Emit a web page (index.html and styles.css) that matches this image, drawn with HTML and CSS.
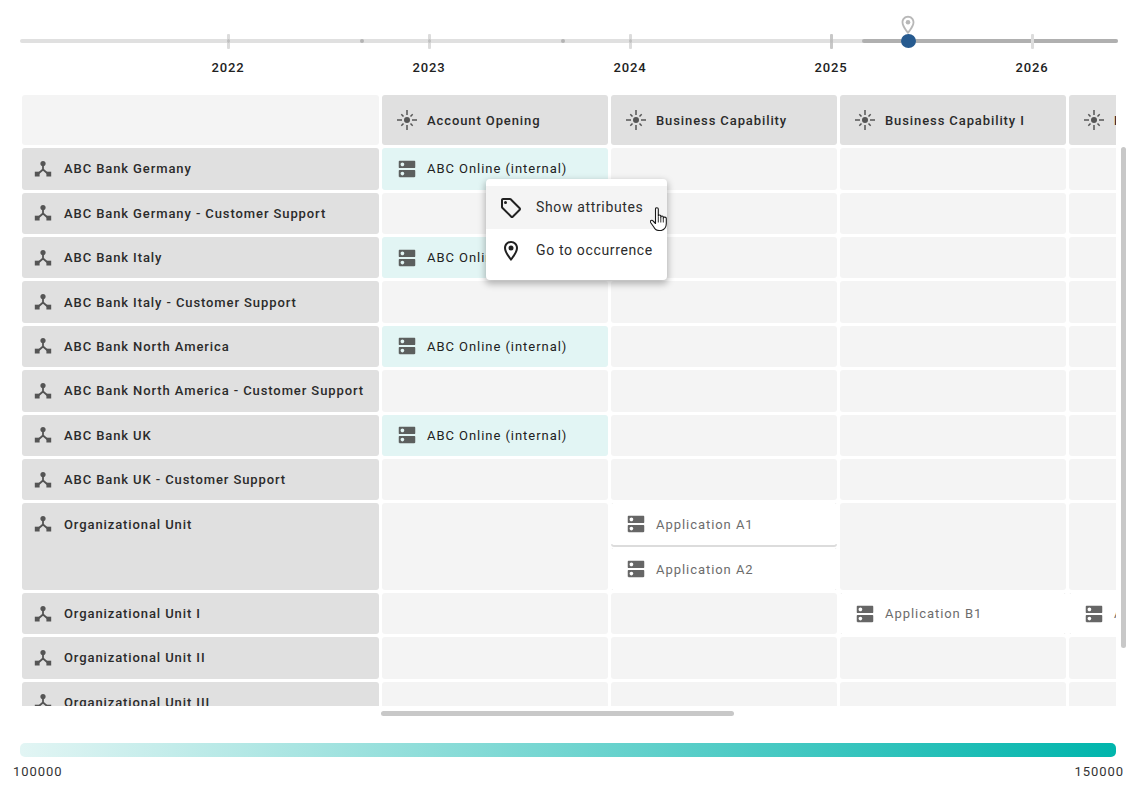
FILE: index.html
```html
<!DOCTYPE html>
<html lang="en">
<head>
<meta charset="utf-8">
<title>Matrix</title>
<link rel="stylesheet" href="styles.css">
</head>
<body>
<svg class="defs" width="0" height="0" aria-hidden="true">
  <symbol id="org" viewBox="0 0 18 18">
    <circle cx="9" cy="3.6" r="2.6"/>
    <path d="M9 4.500v5M9 9.500 3.800 14M9 9.500l5.200 4.500" fill="none" stroke="currentColor" stroke-width="1.800"/>
    <rect x="0.800" y="11.700" width="4.800" height="4.800"/>
    <rect x="12.400" y="11.700" width="4.800" height="4.800"/>
  </symbol>
  <symbol id="dns" viewBox="0 0 24 24">
    <path d="M20 13H4c-.55 0-1 .45-1 1v6c0 .55.45 1 1 1h16c.55 0 1-.45 1-1v-6c0-.55-.45-1-1-1zM7 19c-1.100 0-2-.9-2-2s.9-2 2-2 2 .9 2 2-.9 2-2 2zM20 3H4c-.55 0-1 .45-1 1v6c0 .55.45 1 1 1h16c.55 0 1-.45 1-1V4c0-.55-.45-1-1-1zM7 9c-1.100 0-2-.9-2-2s.9-2 2-2 2 .9 2 2-.9 2-2 2z"/>
  </symbol>
  <symbol id="cap" viewBox="0 0 20 20">
    <circle cx="10" cy="10" r="3"/>
    <path d="M10 0v5M10 15v5M0 10h5M15 10h5M4.300 4.300l2.200 2.200M13.500 13.500l2.200 2.200M15.700 4.300l-2.200 2.200M6.500 13.500l-2.200 2.200" fill="none" stroke="currentColor" stroke-width="1.500"/>
  </symbol>
  <symbol id="tag" viewBox="0 0 24 24">
    <path d="M21.410 11.580l-9-9C12.050 2.220 11.550 2 11 2H4c-1.100 0-2 .9-2 2v7c0 .55.22 1.050.59 1.420l9 9c.36.36.86.58 1.410.58s1.050-.22 1.410-.59l7-7c.37-.36.59-.86.59-1.410s-.23-1.060-.59-1.420zM13 20.010L4 11V4h7v-.01l9 9-7 7.020z"/>
    <circle cx="6.500" cy="6.500" r="1.500"/>
  </symbol>
  <symbol id="pin" viewBox="0 0 24 24">
    <path d="M12 2C8.130 2 5 5.130 5 9c0 5.250 7 13 7 13s7-7.750 7-13c0-3.870-3.130-7-7-7zM7 9c0-2.760 2.240-5 5-5s5 2.240 5 5c0 2.880-2.880 7.190-5 9.880C9.920 16.210 7 11.850 7 9z"/>
    <circle cx="12" cy="9" r="2.500"/>
  </symbol>
</svg>

<header class="timeline">
  <div class="track"></div>
  <div class="track-active"></div>
  <span class="tick tick-2022"></span>
  <span class="tick tick-2023"></span>
  <span class="tick tick-2024"></span>
  <span class="tick tick-2025"></span>
  <span class="tick tick-2026"></span>
  <span class="dot dot-a"></span>
  <span class="dot dot-b"></span>
  <span class="year tick-2022">2022</span>
  <span class="year tick-2023">2023</span>
  <span class="year tick-2024">2024</span>
  <span class="year tick-2025">2025</span>
  <span class="year tick-2026">2026</span>
  <svg class="marker"><use href="#pin"/></svg>
  <span class="handle"></span>
</header>

<main class="matrix-wrap">
  <div class="matrix">
    <div class="grid">
      <div class="corner"></div>
      <div class="col-head"><svg class="ic-cap"><use href="#cap"/></svg><span>Account Opening</span></div>
      <div class="col-head"><svg class="ic-cap"><use href="#cap"/></svg><span>Business Capability</span></div>
      <div class="col-head"><svg class="ic-cap"><use href="#cap"/></svg><span>Business Capability I</span></div>
      <div class="col-head"><svg class="ic-cap"><use href="#cap"/></svg><span>Business Capability II</span></div>

      <div class="row-head"><svg class="ic-org"><use href="#org"/></svg><span>ABC Bank Germany</span></div>
      <div class="cell tint"><svg class="ic-dns"><use href="#dns"/></svg><span>ABC Online (internal)</span></div>
      <div class="cell"></div><div class="cell"></div><div class="cell"></div>

      <div class="row-head"><svg class="ic-org"><use href="#org"/></svg><span>ABC Bank Germany - Customer Support</span></div>
      <div class="cell"></div><div class="cell"></div><div class="cell"></div><div class="cell"></div>

      <div class="row-head"><svg class="ic-org"><use href="#org"/></svg><span>ABC Bank Italy</span></div>
      <div class="cell tint"><svg class="ic-dns"><use href="#dns"/></svg><span>ABC Online (internal)</span></div>
      <div class="cell"></div><div class="cell"></div><div class="cell"></div>

      <div class="row-head"><svg class="ic-org"><use href="#org"/></svg><span>ABC Bank Italy - Customer Support</span></div>
      <div class="cell"></div><div class="cell"></div><div class="cell"></div><div class="cell"></div>

      <div class="row-head"><svg class="ic-org"><use href="#org"/></svg><span>ABC Bank North America</span></div>
      <div class="cell tint"><svg class="ic-dns"><use href="#dns"/></svg><span>ABC Online (internal)</span></div>
      <div class="cell"></div><div class="cell"></div><div class="cell"></div>

      <div class="row-head"><svg class="ic-org"><use href="#org"/></svg><span>ABC Bank North America - Customer Support</span></div>
      <div class="cell"></div><div class="cell"></div><div class="cell"></div><div class="cell"></div>

      <div class="row-head"><svg class="ic-org"><use href="#org"/></svg><span>ABC Bank UK</span></div>
      <div class="cell tint"><svg class="ic-dns"><use href="#dns"/></svg><span>ABC Online (internal)</span></div>
      <div class="cell"></div><div class="cell"></div><div class="cell"></div>

      <div class="row-head"><svg class="ic-org"><use href="#org"/></svg><span>ABC Bank UK - Customer Support</span></div>
      <div class="cell"></div><div class="cell"></div><div class="cell"></div><div class="cell"></div>

      <div class="row-head tall"><svg class="ic-org"><use href="#org"/></svg><span>Organizational Unit</span></div>
      <div class="cell"></div>
      <div class="stack">
        <div class="cell app"><svg class="ic-dns"><use href="#dns"/></svg><span>Application A1</span></div>
        <div class="cell app"><svg class="ic-dns"><use href="#dns"/></svg><span>Application A2</span></div>
      </div>
      <div class="cell"></div><div class="cell"></div>

      <div class="row-head"><svg class="ic-org"><use href="#org"/></svg><span>Organizational Unit I</span></div>
      <div class="cell"></div><div class="cell"></div>
      <div class="cell app"><svg class="ic-dns"><use href="#dns"/></svg><span>Application B1</span></div>
      <div class="cell app"><svg class="ic-dns"><use href="#dns"/></svg><span>Application B2</span></div>

      <div class="row-head"><svg class="ic-org"><use href="#org"/></svg><span>Organizational Unit II</span></div>
      <div class="cell"></div><div class="cell"></div><div class="cell"></div><div class="cell"></div>

      <div class="row-head"><svg class="ic-org"><use href="#org"/></svg><span>Organizational Unit III</span></div>
      <div class="cell"></div><div class="cell"></div><div class="cell"></div><div class="cell"></div>
    </div>
  </div>
  <div class="scroll-v"></div>
  <div class="scroll-h"></div>
  <div class="menu">
    <div class="menu-item hover"><svg class="ic-menu"><use href="#tag"/></svg><span>Show attributes</span></div>
    <div class="menu-item"><svg class="ic-menu"><use href="#pin"/></svg><span>Go to occurrence</span></div>
  </div>
  <svg class="cursor" viewBox="0 0 18 24">
    <path d="M5.500 2c0-1.700 2.800-1.700 2.800 0v7c0-1.400 2.500-1.400 2.500 0v1c0-1.300 2.500-1.300 2.500 0v1c0-1.200 3-1.200 3 .5v5c0 3.500-1.800 6-5 7h-2c-3 0-4.500-1.500-5.500-3.500L.6 15.500c-.9-1.800 1.300-3 2.500-1.500l2.400 2.500z" fill="#fff" stroke="#1a1a1a" stroke-width="1.100" stroke-linejoin="round"/>
    <path d="M8.300 9.500v6M10.800 10v5.500M13.300 11v4.500" fill="none" stroke="#1a1a1a" stroke-width=".9"/>
  </svg>
</main>

<footer class="legend">
  <div class="gradient"></div>
  <div class="legend-labels"><span>100000</span><span>150000</span></div>
</footer>
</body>
</html>
```

FILE: styles.css
```css
* { box-sizing: border-box; }
html, body { margin: 0; padding: 0; }
body {
  width: 1136px;
  height: 796px;
  overflow: hidden;
  background: #fff;
  color: #212121;
  font-family: Roboto, "Liberation Sans", sans-serif;
}
.defs { position: absolute; }

/* timeline */
.timeline { position: relative; height: 95px; }
.track {
  position: absolute; left: 20px; top: 39px;
  width: 1098px; height: 4px;
  background: #e0e0e0; border-radius: 2px;
}
.track-active {
  position: absolute; left: 862px; top: 39px;
  width: 256px; height: 4px;
  background: #b0b0b0; border-radius: 2px;
}
.tick {
  position: absolute; top: 34px;
  width: 3px; height: 15px; margin-left: -1.500px;
  background: #dcdcdc; border-radius: 1px;
}
.tick::after {
  content: "";
  position: absolute; left: 0; top: 5px;
  width: 3px; height: 4px;
  background: #c0c0c0; border-radius: 50%;
}
span.tick-2025:not(.year) { background: #c8c8c8; }
span.tick-2026:not(.year)::after { display: none; }
.tick-2022 { left: 228px; }
.tick-2023 { left: 429px; }
.tick-2024 { left: 630px; }
.tick-2025 { left: 831px; }
.tick-2026 { left: 1032px; }
.dot {
  position: absolute; top: 39px;
  width: 4px; height: 4px; margin-left: -2px;
  background: #b4b4b4; border-radius: 50%;
}
.dot-a { left: 362px; }
.dot-b { left: 563px; }
.year {
  position: absolute; top: 60px;
  width: 60px; margin-left: -30px;
  text-align: center;
  font-size: 13px; line-height: 16px; font-weight: 500;
  letter-spacing: .9px;
}
.marker {
  position: absolute; left: 896px; top: 14px;
  width: 24px; height: 22px;
  fill: #b8b8b8;
}
.handle {
  position: absolute; left: 901px; top: 34px;
  width: 15px; height: 14px;
  background: #265a8f; border-radius: 50%;
}

/* matrix */
.matrix-wrap { position: relative; height: 630px; }
.matrix {
  position: absolute; left: 22px; top: 0;
  width: 1094px; height: 611px;
  overflow: hidden;
}
.grid {
  display: grid;
  grid-template-columns: 357px repeat(4, 226px);
  grid-template-rows: 50.2px repeat(8, 41.4px) 86.6px repeat(3, 41.4px);
  gap: 3px;
  width: max-content;
  font-size: 13px;
  letter-spacing: .9px;
}
.corner { background: #f4f4f4; border-radius: 3px; }
.col-head, .row-head {
  display: flex; align-items: center;
  background: #e0e0e0; border-radius: 3px;
  font-weight: 500; color: #2b2b2b;
  white-space: nowrap; overflow: hidden;
}
.col-head { padding-left: 15px; gap: 10px; }
.row-head { padding-left: 12px; gap: 12px; }
.row-head.tall { align-items: flex-start; padding-top: 12px; }
.row-head.tall span { line-height: 18px; margin-top: 1px; }
.cell {
  display: flex; align-items: center; gap: 10px;
  padding-left: 16px;
  background: #f4f4f4; border-radius: 3px;
  white-space: nowrap; overflow: hidden;
  min-width: 0;
  letter-spacing: .95px;
}
.cell.tint { background: #e2f5f4; color: #212121; }
.cell.app {
  color: #6c6c6c;
  background:
    linear-gradient(#ececec, #ececec) 0 0 / 2px 1px no-repeat,
    linear-gradient(#ececec, #ececec) 100% 0 / 2px 1px no-repeat,
    linear-gradient(#ececec, #ececec) 0 100% / 2px 1px no-repeat,
    linear-gradient(#ececec, #ececec) 100% 100% / 2px 1px no-repeat,
    #fff;
}
.stack { display: flex; flex-direction: column; gap: 1px; }
.stack .cell:first-child { flex: none; height: 44px; border-bottom: 2px solid #dcdcdc; }
.stack .cell:last-child { flex: 1; }
.ic-org { width: 18px; height: 18px; flex: none; fill: #555; color: #555; }
.ic-cap { width: 20px; height: 20px; flex: none; fill: #555; color: #555; }
.ic-dns { width: 22px; height: 22px; flex: none; fill: #5c5f5e; margin-left: -2px; margin-right: -1px; }
.app .ic-dns { fill: #666; }

/* scrollbars */
.scroll-v {
  position: absolute; left: 1121px; top: 52px;
  width: 5px; height: 501px;
  background: #c8c8c8; border-radius: 3px;
}
.scroll-h {
  position: absolute; left: 381px; top: 616px;
  width: 353px; height: 5px;
  background: #c8c8c8; border-radius: 3px;
}

/* context menu */
.menu {
  position: absolute; left: 486px; top: 84px;
  width: 181px; height: 101px;
  padding: 7px 0;
  background: #fff; border-radius: 4px;
  box-shadow: 0 3px 7px 1px rgba(0, 0, 0, .28);
  font-size: 14px; letter-spacing: .65px; color: #2c2c2c;
}
.menu-item {
  display: flex; align-items: center; gap: 13px;
  height: 43px; padding-left: 13px;
  white-space: nowrap;
}
.menu-item span { position: relative; top: -1px; }
.menu-item.hover { background: #f4f4f4; }
.ic-menu { width: 24px; height: 24px; flex: none; fill: #212121; }
.cursor { position: absolute; left: 650px; top: 112px; width: 18px; height: 24px; }

/* legend */
.legend { position: relative; height: 71px; padding: 18px 20px 0; }
.gradient {
  height: 14px; border-radius: 5px;
  background: linear-gradient(90deg, #e2f5f4 0%, #00b5ac 100%);
}
.legend-labels {
  display: flex; justify-content: space-between;
  margin: 7px -8px 0 -7px;
  font-size: 13px; line-height: 16px; letter-spacing: .95px;
  color: #333;
}
```
